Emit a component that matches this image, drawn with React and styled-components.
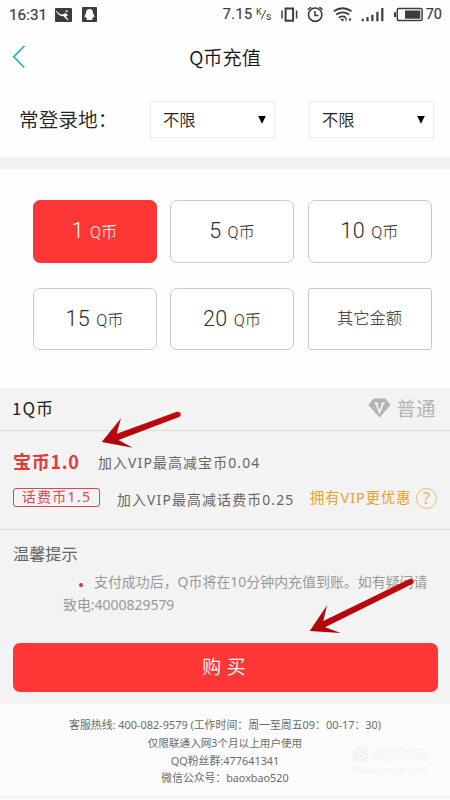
import React from "react";
import styled, { createGlobalStyle } from "styled-components";

const Global = createGlobalStyle`
  * { box-sizing: border-box; }
  body { margin: 0; background: #fff; }
`;

const Page = styled.div`
  position: relative;
  width: 450px;
  height: 800px;
  overflow: hidden;
  display: flex;
  flex-direction: column;
  background: #fefefe;
  color: #222;
  font-family: "Noto Sans", "Noto Sans CJK SC", sans-serif;
  white-space: nowrap;
`;

const StatusBar = styled.div`
  height: 28px;
  flex: none;
  display: flex;
  align-items: center;
  justify-content: space-between;
  padding: 1px 8px 0 9px;
  color: #3c3c3c;
  font: 500 14.5px/28px Roboto, sans-serif;
`;

const StatusGroup = styled.div`
  display: flex;
  align-items: center;
  height: 28px;
  svg { display: block; }
`;

const Clock = styled.span`
  width: 46px;
  font-weight: 400;
  font-size: 15.3px;
  -webkit-text-stroke: 0.2px #3c3c3c;
`;

const Speed = styled.span`
  width: 33px;
  font-weight: 400;
  letter-spacing: 0.4px;
  -webkit-text-stroke: 0.2px #3c3c3c;
`;

const Battery = styled.span`
  font-weight: 400;
  font-size: 14.5px;
  -webkit-text-stroke: 0.2px #3c3c3c;
`;

const Header = styled.header`
  height: 58px;
  flex: none;
  display: grid;
  grid-template-columns: 40px 1fr 40px;
  align-items: center;
  svg { display: block; margin-left: 12px; }
`;

const Title = styled.h1`
  margin: 0;
  text-align: center;
  font: 350 19.2px/28px "Noto Sans CJK SC", sans-serif;
  color: #151515;
`;

const LocationRow = styled.section`
  height: 71px;
  flex: none;
  display: flex;
  align-items: flex-start;
  padding: 15px 16px 0 19px;
`;

const LocationLabel = styled.span`
  width: 131px;
  flex: none;
  font-size: 19.7px;
  font-weight: 350;
  line-height: 37px;
`;

const Select = styled.button`
  width: 125px;
  height: 37px;
  margin: 0 34px 0 0;
  padding: 0 8px 1px 12px;
  display: flex;
  flex: none;
  align-items: center;
  justify-content: space-between;
  border: 1.5px solid #ededed;
  background: #fff;
  color: #222;
  font: 350 16.3px/24px "Noto Sans CJK SC", sans-serif;
`;

const Divider = styled.div`
  height: 12px;
  flex: none;
  background: #f2f2f2;
`;

const AmountGrid = styled.section`
  height: 219px;
  flex: none;
  display: grid;
  grid-template-columns: repeat(3, 124px);
  grid-template-rows: 63px 62px;
  column-gap: 13.5px;
  row-gap: 25px;
  padding: 31px 0 0 32.5px;
`;

const Amount = styled.button`
  display: flex;
  align-items: baseline;
  justify-content: center;
  gap: 6px;
  margin: 0;
  padding: ${(p) => (p.$square ? "13px" : "15px")} 0 0;
  border: 1.5px solid ${(p) => (p.$active ? "#ff3636" : "#cbcbcb")};
  border-radius: ${(p) => (p.$square ? "3px" : "7px")};
  background: ${(p) => (p.$active ? "#ff3636" : "#fff")};
  color: ${(p) => (p.$active ? "#fff" : "#2b2b2b")};
  font: 300 16.3px/30px "Noto Sans CJK SC", sans-serif;
`;

const AmountNumber = styled.span`
  font: 300 21.5px/30px Roboto, sans-serif;
  letter-spacing: 0.4px;
`;

const Unit = styled.span`
  font-family: Roboto, "Noto Sans CJK SC", sans-serif;
  position: relative;
  top: -0.5px;
`;

const Panel = styled.section`
  height: 316px;
  flex: none;
  background: #f3f3f3;
  display: flex;
  flex-direction: column;
`;

const PanelHead = styled.div`
  height: 43px;
  flex: none;
  display: flex;
  justify-content: space-between;
  align-items: center;
  padding: 0 14px 3px 12px;
  border-bottom: 1.5px solid #dadada;
  font: 400 17px/28px "Noto Sans CJK SC", sans-serif;
  letter-spacing: 1px;
`;

const Level = styled.span`
  display: flex;
  align-items: center;
  gap: 5px;
  color: #b4b4b4;
  font-size: 19.5px;
  letter-spacing: 0.4px;
`;

const Prices = styled.div`
  height: 99px;
  flex: none;
  padding: 15px 0 0 13px;
  border-bottom: 1.5px solid #dadada;
`;

const PriceRow = styled.div`
  height: ${(p) => p.$h}px;
  display: flex;
  align-items: center;
`;

const Coin = styled.strong`
  width: 85px;
  flex: none;
  padding-bottom: 2px;
  color: #eb3639;
  font: 700 18px/26px "Noto Sans CJK SC", sans-serif;
  letter-spacing: 0.7px;
`;

const BillCoin = styled.span`
  width: 87px;
  height: 19px;
  flex: none;
  margin: 0 17px 3px 0;
  border: 1.3px solid #d94a50;
  border-radius: 3px;
  color: #d94a50;
  font-size: 14px;
  line-height: 15px;
  letter-spacing: 1.3px;
  text-align: center;
`;

const Benefit = styled.span`
  width: ${(p) => p.$w}px;
  flex: none;
  color: #666;
  font-size: 13.9px;
  letter-spacing: 1.15px;
`;

const VipLink = styled.span`
  width: 106px;
  flex: none;
  color: #eca02b;
  font-size: 14.3px;
  line-height: 20px;
  letter-spacing: 1px;
  margin-bottom: 2px;
`;

const Help = styled.span`
  width: 21px;
  height: 21px;
  flex: none;
  border: 1.3px solid #edb778;
  border-radius: 50%;
  color: #edb06a;
  font: 16px/18px "Noto Sans", sans-serif;
  text-align: center;
`;

const Tips = styled.div`
  height: 113px;
  flex: none;
  padding: 11px 0 0 13px;
`;

const TipsTitle = styled.h2`
  margin: 0;
  font-size: 16.2px;
  line-height: 26px;
  font-weight: 400;
  color: #666;
`;

const TipsBody = styled.p`
  margin: 4px 0 0 50px;
  color: #999;
  font-size: 13.95px;
  line-height: 22.5px;
`;

const FirstLine = styled.span`
  display: flex;
  align-items: center;
  padding-left: 16px;
`;

const Dot = styled.i`
  width: 4px;
  height: 4px;
  margin: 5px 11px 0 0;
  border-radius: 50%;
  background: #d33240;
`;

const Buy = styled.button`
  width: 425px;
  height: 49px;
  margin: 0 0 0 13px;
  padding: 0 3px 4px 0;
  border: 0;
  border-radius: 7px;
  background: #ff3636;
  color: #fff;
  font: 350 19px/30px "Noto Sans CJK SC", sans-serif;
  word-spacing: 1.5px;
`;

const Footer = styled.footer`
  height: 92px;
  flex: none;
  padding-top: 12px;
  background: #fcfcfc;
  color: #6b6b6b;
  text-align: center;
`;

const FooterLine = styled.div`
  height: 17.8px;
  line-height: 18.5px;
  font-size: ${(p) => p.$size}px;
`;

const BottomEdge = styled.div`
  flex: 1;
  border-top: 2px solid #efefef;
  background: #fafafa;
`;

const Watermark = styled.div`
  position: absolute;
  left: 352px;
  top: 744px;
  display: grid;
  grid-template-columns: 17px auto;
  column-gap: 3px;
  align-items: center;
  color: #fff;
  font-size: 13.8px;
  line-height: 20px;
  text-shadow: 0 0 1.5px #ddd;
`;

const WatermarkLogo = styled.span`
  width: 17px;
  height: 17px;
  border-radius: 50%;
  background: #f4f4f4;
  font: 700 14px/17px "Liberation Sans", sans-serif;
  text-align: center;
`;

const WatermarkSite = styled.small`
  grid-column: 1 / 3;
  font-size: 8px;
  line-height: 12px;
  letter-spacing: 0.4px;
`;

const Arrows = styled.svg`
  position: absolute;
  left: 0;
  top: 0;
  pointer-events: none;
`;

const ink = "#3c3c3c";

const PictureIcon = () => (
  <svg width="17" height="14" viewBox="0 0 17 14">
    <rect width="17" height="14" rx="1" fill={ink} />
    <path d="M1.3 2.6Q4.5 6.8 7.4 6.5Q9.5 5.8 10.5 4.9L13 7.2L11 8.4L14 12.4L11.2 11.2L8.8 8.2Q4.5 8.5 1.3 4Z" fill="#fff" />
    <circle cx="11.6" cy="3.3" r="1" fill="#fff" />
  </svg>
);

const PenguinIcon = () => (
  <svg width="15" height="15" viewBox="0 0 15 15">
    <rect width="15" height="15" rx="0.8" fill={ink} />
    <path d="M7.5 2C5 2 3.9 3.8 4 6.2C3.1 7.4 2.2 9.4 2.7 10.4C3.1 10.9 3.6 10.2 4 9.8C4.1 10.7 4.5 11.3 4.9 11.7C3.5 12.9 5 13.1 7.5 12.7C10 13.1 11.5 12.9 10.1 11.7C10.5 11.3 10.9 10.7 11 9.8C11.4 10.2 11.9 10.9 12.3 10.4C12.8 9.4 11.9 7.4 11 6.2C11.1 3.8 10 2 7.5 2Z" fill="#fff" />
  </svg>
);

const StatusIcons = () => (
  <svg width="170" height="22" viewBox="256 3.5 170 22" fill="none" stroke={ink}>
    <g fill={ink} stroke="none" fontFamily="Roboto" fontWeight="400">
      <text x="256" y="14" fontSize="9">K</text>
      <text x="266" y="19.8" fontSize="10.5">s</text>
    </g>
    <path d="M261.3 18.8L265.8 9.5" strokeWidth="1" />
    <rect x="285.6" y="8" width="7.5" height="12.2" strokeWidth="2" />
    <path d="M282 10v8M296.6 10v8" strokeWidth="1.5" />
    <circle cx="315.2" cy="14.2" r="6.7" strokeWidth="1.6" />
    <path d="M315 10.5V15H318.4" strokeWidth="1.5" />
    <path d="M307.8 9.2L311 6.6M319.4 6.6L322.6 9.2" strokeWidth="1.4" />
    <path d="M333.7 10.7Q342.7 4.8 351.5 10.7M336.2 14Q342.7 9.7 349.2 14M338.7 17.2Q342.3 14.6 345.7 17" strokeWidth="1.8" />
    <path d="M340.2 18.8L342.5 21.1L344.2 19.2Q342.4 17.7 340.2 18.8Z" fill={ink} stroke="none" />
    <path d="M346 17l1.5 1.8h-3zM350 20.8l-1.5-2.2h3z" fill={ink} stroke="none" />
    <path d="M346 18v3M350 17v2.6" strokeWidth="0.8" />
    <path d="M362.7 18.3v2.5M367.5 16.5v4.3M372.4 14.3v6.5M377.4 11.2v9.6M382.3 7.5v13.3" strokeWidth="2.2" />
    <rect x="397.3" y="8.1" width="24.8" height="12" rx="1.5" strokeWidth="1.5" />
    <rect x="405" y="10" width="15.3" height="8.2" fill={ink} stroke="none" />
    <path d="M395 11.7v4.8" strokeWidth="2" />
  </svg>
);

const BackIcon = () => (
  <svg width="14" height="24" viewBox="0 0 14 24" fill="none">
    <path d="M12.4 1L1.8 11.8L12.2 22.5" stroke="#26b6ac" strokeWidth="1.7" />
  </svg>
);

const CaretIcon = () => (
  <svg width="8" height="9" viewBox="0 0 8 9">
    <path d="M0.2 1H7.8L4 8.8Z" fill="#000" />
  </svg>
);

const DiamondIcon = () => (
  <svg width="23" height="20" viewBox="0 0 23 20">
    <path d="M5.5 0.5H17.5L22.7 7L11.5 19.5L0.3 7Z" fill="#b3b3b3" />
    <path d="M6.6 5.5H10.2M13.4 5.5H16.6M8.3 6L11.5 14.2L15 6" fill="none" stroke="#f3f3f3" strokeWidth="1.8" />
  </svg>
);

const amounts = ["1", "5", "10", "15", "20"];
const footerLines = [
  { text: "客服热线: 400-082-9579 (工作时间：周一至周五09：00-17：30)", size: 10.9 },
  { text: "仅限联通入网3个月以上用户使用", size: 10.6 },
  { text: "QQ粉丝群:477641341", size: 10.9 },
  { text: "微信公众号：baoxbao520", size: 10.8 },
];

export default function App() {
  return (
    <Page>
      <Global />
      <StatusBar>
        <StatusGroup>
          <Clock>16:31</Clock>
          <PictureIcon />
          <svg width="10" height="1" />
          <PenguinIcon />
        </StatusGroup>
        <StatusGroup>
          <Speed>7.15</Speed>
          <StatusIcons />
          <Battery>70</Battery>
        </StatusGroup>
      </StatusBar>
      <Header>
        <BackIcon />
        <Title>Q币充值</Title>
      </Header>
      <LocationRow>
        <LocationLabel>常登录地：</LocationLabel>
        <Select>不限<CaretIcon /></Select>
        <Select>不限<CaretIcon /></Select>
      </LocationRow>
      <Divider />
      <AmountGrid>
        {amounts.map((n) => (
          <Amount key={n} $active={n === "1"}>
            <AmountNumber>{n}</AmountNumber>
            <Unit>Q币</Unit>
          </Amount>
        ))}
        <Amount $square>其它金额</Amount>
      </AmountGrid>
      <Panel>
        <PanelHead>
          <span>1Q币</span>
          <Level><DiamondIcon />普通</Level>
        </PanelHead>
        <Prices>
          <PriceRow $h={31}>
            <Coin>宝币1.0</Coin>
            <Benefit $w={200}>加入VIP最高减宝币0.04</Benefit>
          </PriceRow>
          <PriceRow $h={43}>
            <BillCoin>话费币1.5</BillCoin>
            <Benefit $w={193}>加入VIP最高减话费币0.25</Benefit>
            <VipLink>拥有VIP更优惠</VipLink>
            <Help>?</Help>
          </PriceRow>
        </Prices>
        <Tips>
          <TipsTitle>温馨提示</TipsTitle>
          <TipsBody>
            <FirstLine><Dot />支付成功后，Q币将在10分钟内充值到账。如有疑问请</FirstLine>
            致电:4000829579
          </TipsBody>
        </Tips>
        <Buy>购 买</Buy>
      </Panel>
      <Footer>
        {footerLines.map((l) => (
          <FooterLine key={l.text} $size={l.size}>{l.text}</FooterLine>
        ))}
      </Footer>
      <BottomEdge />
      <Watermark>
        <WatermarkLogo>S</WatermarkLogo>
        <span>搜狗指南</span>
        <WatermarkSite>zhinan.sogou.com</WatermarkSite>
      </Watermark>
      <Arrows width="450" height="800" viewBox="0 0 450 800">
        <defs>
          <linearGradient id="arrowRed" x1="0" y1="0" x2="0.35" y2="1">
            <stop offset="0" stopColor="#cb0a12" />
            <stop offset="1" stopColor="#ab0509" />
          </linearGradient>
        </defs>
        <g fill="url(#arrowRed)">
          <path d="M101.7 442L121 418.3L116.7 433.8L176.8 411.8Q179.8 411.3 180.7 413.6Q181 416.2 179 417L118.5 440L132.7 447.7Z" />
          <path d="M309.7 631L327 605.3L323.3 621L409.5 579Q412.4 578.1 413.6 580.4Q414.2 582.8 412.2 584L325 627.3L340.7 633Z" />
        </g>
      </Arrows>
    </Page>
  );
}
